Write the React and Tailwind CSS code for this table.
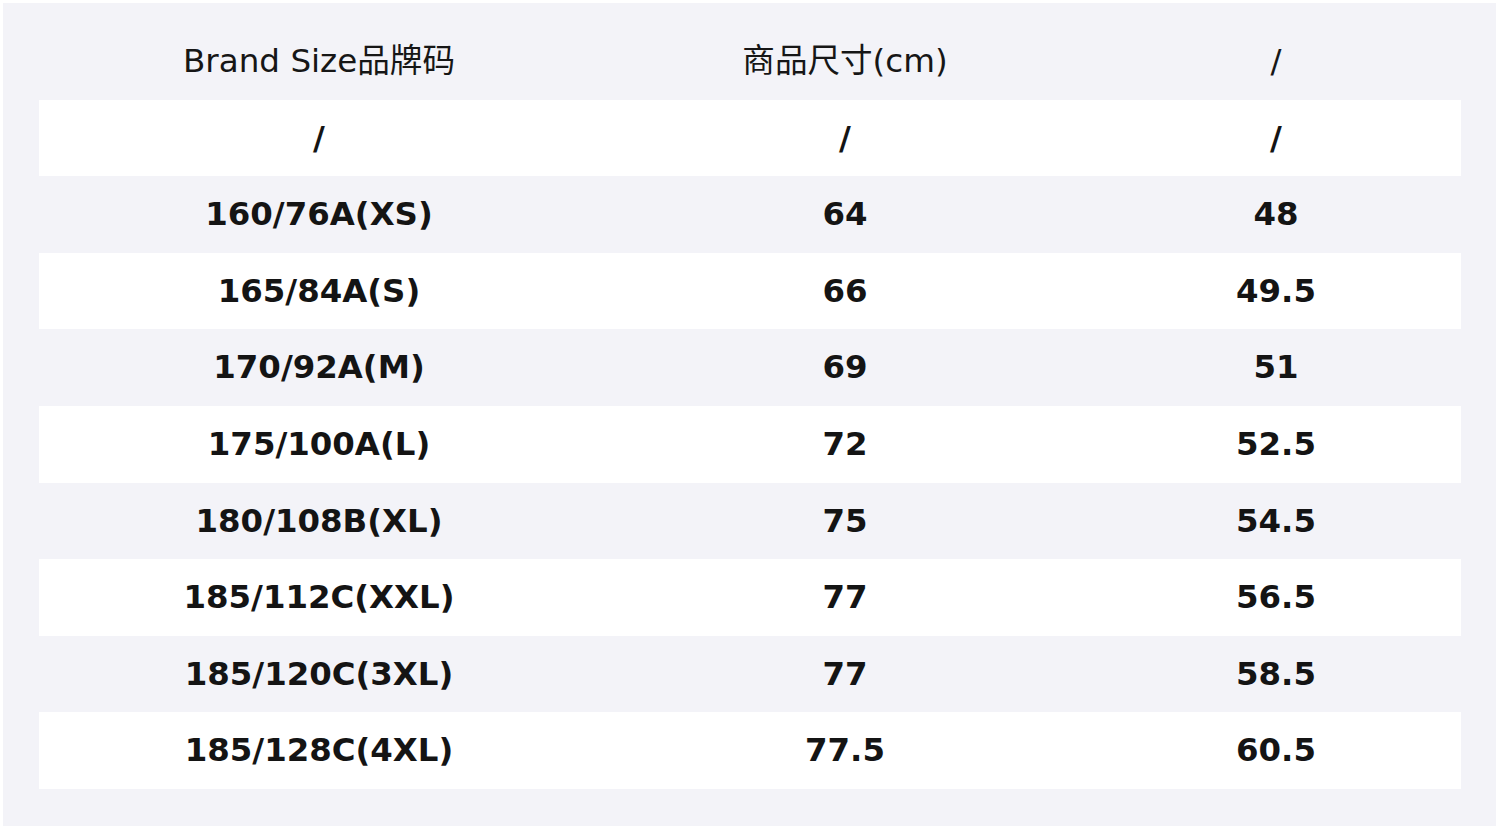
export default function App() {
  const rows = [
    ["/", "/", "/"],
    ["160/76A(XS)", "64", "48"],
    ["165/84A(S)", "66", "49.5"],
    ["170/92A(M)", "69", "51"],
    ["175/100A(L)", "72", "52.5"],
    ["180/108B(XL)", "75", "54.5"],
    ["185/112C(XXL)", "77", "56.5"],
    ["185/120C(3XL)", "77", "58.5"],
    ["185/128C(4XL)", "77.5", "60.5"],
  ];
  const font = { fontFamily: '"DejaVu Sans", "Noto Sans CJK SC", sans-serif' };
  return (
    <div className="w-[1500px] h-[829px] bg-white pt-[3px] pl-[3px] pr-[4px] pb-[3px]" style={font}>
      <div className="h-full bg-[#f3f3f8] pl-[36px] pr-[35px] pt-[20px]">
        <div className="grid grid-cols-[560px_492px_370px] h-[76.6px] items-center text-center text-[32.6px] text-[#161616]">
          <div>Brand Size品牌码</div>
          <div>商品尺寸(cm)</div>
          <div>/</div>
        </div>
        {rows.map((r, i) => (
          <div
            key={i}
            className={`grid grid-cols-[560px_492px_370px] h-[76.6px] items-center text-center text-[32.4px] font-bold text-[#141414] ${i % 2 === 0 ? "bg-white" : "bg-transparent"}`}
          >
            <div>{r[0]}</div>
            <div>{r[1]}</div>
            <div>{r[2]}</div>
          </div>
        ))}
      </div>
    </div>
  );
}
